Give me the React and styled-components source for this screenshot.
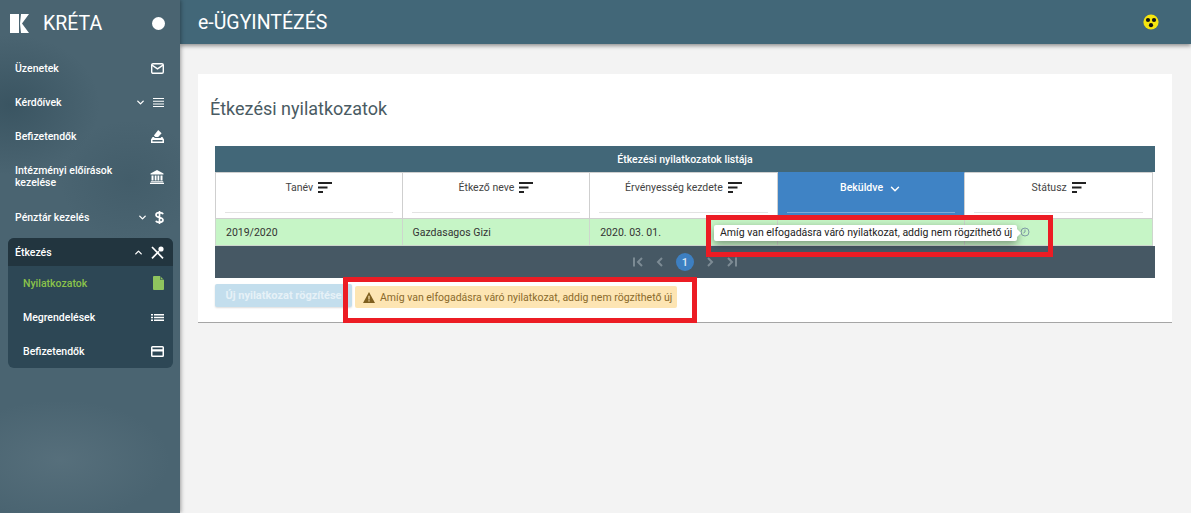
import { createGlobalStyle } from 'styled-components';
import styled from 'styled-components';
import { LuChevronDown, LuChevronUp } from 'react-icons/lu';

const GlobalStyle = createGlobalStyle`
  html, body { margin: 0; padding: 0; }
  body {
    background: #f3f3f3;
    font-family: Roboto, "Liberation Sans", sans-serif;
    overflow: hidden;
  }
`;

const Page = styled.div`
  display: flex;
  width: 1191px;
  height: 513px;
  overflow: hidden;
`;

const Sidebar = styled.aside`
  width: 180px;
  flex: none;
  box-sizing: border-box;
  color: #fff;
  box-shadow: 1px 0 4px rgba(0, 0, 0, 0.35);
  position: relative;
  z-index: 2;
  background:
    radial-gradient(ellipse 90px 70px at 10px 105px, rgba(45, 72, 85, 0.55), transparent),
    radial-gradient(ellipse 70px 60px at 130px 180px, rgba(45, 72, 85, 0.25), transparent),
    radial-gradient(ellipse 110px 60px at 60px 460px, rgba(130, 150, 160, 0.22), transparent),
    #4a6471;
`;

const Brand = styled.div`
  height: 46px;
  display: flex;
  align-items: center;
  padding: 0 15px 0 10px;
  font-size: 19.5px;
  span { margin-left: 13px; flex: 1; }
`;

const Dot = styled.i`
  width: 13px;
  height: 13px;
  border-radius: 50%;
  background: #fff;
`;

const Menu = styled.nav`
  display: flex;
  flex-direction: column;
  margin-top: 5px;
`;

const Item = styled.div`
  height: ${p => (p.$open ? 28 : 34)}px;
  flex: none;
  display: flex;
  align-items: center;
  gap: 7px;
  padding: 0 16px 0 15px;
  font-size: 10.5px;
  font-weight: 500;
  line-height: 12px;
  color: ${p => (p.$active ? '#8bc34a' : '#fff')};
  background: ${p => (p.$open ? '#22353f' : 'transparent')};
  border-radius: ${p => (p.$open ? '6px 6px 0 0' : '0')};
  svg { flex: none; }
`;

const Tall = styled(Item)`
  height: 47px;
`;

const Label = styled.div`
  flex: 1;
  margin-top: 1px;
`;

const OpenGroup = styled.div`
  margin: 4px 7px 0 8px;
  background: #2d4755;
  border-radius: 6px;
  ${Item} { padding-left: 7px; padding-right: 9px; }
  ${Item}[data-sub] { padding-left: 15px; }
`;

const Main = styled.main`
  flex: 1;
  min-width: 0;
  display: flex;
  flex-direction: column;
`;

const Header = styled.header`
  height: 44px;
  flex: none;
  background: #426778;
  box-shadow: 0 2px 4px rgba(0, 0, 0, 0.4);
  display: flex;
  align-items: center;
  justify-content: space-between;
  padding: 0 32px 0 18px;
  color: #fff;
  font-size: 19.5px;
`;

const Content = styled.div`
  padding: 30px 19px 0 18px;
`;

const Card = styled.section`
  height: 249px;
  box-sizing: border-box;
  background: #fff;
  border-bottom: 1px solid #a5a5a5;
  padding: 24px 17px 0 12px;
  position: relative;
`;

const Title = styled.h1`
  margin: 0 0 26px;
  font-size: 18px;
  line-height: 22px;
  font-weight: 400;
  color: #4a5b63;
`;

const TableWrap = styled.div`
  margin-left: 5px;
  width: 940px;
`;

const Caption = styled.div`
  height: 26px;
  background: #426778;
  color: #fff;
  font-size: 10.5px;
  font-weight: 500;
  display: flex;
  align-items: center;
  justify-content: center;
`;

const Cols = styled.div`
  display: grid;
  grid-template-columns: repeat(5, 187.6px);
  width: 938px;
`;

const HeadCell = styled.div`
  height: 47px;
  box-sizing: border-box;
  background: ${p => (p.$sorted ? '#3f83c5' : '#fff')};
  color: ${p => (p.$sorted ? '#fff' : '#444')};
  border: 1px solid #cfcfcf;
  border-width: 1px 1px 1px 0;
  ${p => p.$first && 'border-left-width: 1px;'}
  ${p => p.$sorted && 'border-color: #3f83c5 #cfcfcf #cfcfcf #3f83c5;'}
  font-size: 10.5px;
  font-weight: ${p => (p.$sorted ? 500 : 400)};
  padding: 0 9px;
`;

const HeadTitle = styled.div`
  height: 40px;
  padding-top: 7px;
  box-sizing: border-box;
  display: flex;
  justify-content: center;
  gap: 5px;
  line-height: 15px;
  border-bottom: 1px solid ${p => (p.$sorted ? '#7ea9d6' : '#e3e3e3')};
  svg { flex: none; margin-top: 2px; }
`;

const Cell = styled.div`
  height: 27px;
  box-sizing: border-box;
  background: #c6f5c6;
  border: 1px solid #cdd6cd;
  border-width: 0 1px 1px 0;
  ${p => p.$first && 'border-left-width: 1px;'}
  color: #333;
  font-size: 10.5px;
  padding-left: 10px;
  display: flex;
  align-items: center;
`;

const StatusIcon = styled.svg`
  margin-left: 45px;
`;

const Pager = styled.div`
  height: 32px;
  background: #465864;
  display: flex;
  align-items: center;
  justify-content: center;
  gap: 10px;
  color: #7c8b94;
`;

const PageDot = styled.div`
  width: 18px;
  height: 18px;
  border-radius: 50%;
  background: #3d7fc1;
  color: #dfe9f3;
  font-size: 11px;
  font-weight: 500;
  display: flex;
  align-items: center;
  justify-content: center;
`;

const Actions = styled.div`
  display: flex;
  align-items: flex-start;
  margin-top: 6px;
  gap: 3px;
`;

const Button = styled.button`
  width: 137px;
  height: 23px;
  border: 0;
  border-radius: 2px;
  padding: 0;
  background: #c3deed;
  color: #e6f1f7;
  font: 700 11px Roboto, "Liberation Sans", sans-serif;
  box-shadow: 0 1px 2px rgba(0, 0, 0, 0.14);
  white-space: nowrap;
`;

const Alert = styled.div`
  width: 322px;
  height: 22px;
  margin-top: 2px;
  box-sizing: border-box;
  border-radius: 2px;
  background: #fde5b3;
  color: #8a6a2b;
  font-size: 10.5px;
  display: flex;
  align-items: center;
  gap: 5px;
  padding-left: 8px;
  white-space: nowrap;
  svg { flex: none; }
`;

const Tooltip = styled.div`
  position: absolute;
  left: 516px;
  top: 151px;
  height: 16px;
  width: 303px;
  box-sizing: border-box;
  background: #fff;
  border-radius: 2px;
  box-shadow: 0 3px 8px rgba(0, 0, 0, 0.4);
  color: #222;
  font-size: 10.5px;
  line-height: 16px;
  padding-left: 6px;
  white-space: nowrap;
  &::after {
    content: '';
    position: absolute;
    right: -4px;
    top: 4px;
    border: 4px solid transparent;
    border-left-color: #fff;
    border-right-width: 0;
  }
`;

const Mark = styled.div`
  position: absolute;
  box-sizing: border-box;
  border: 5px solid #ec1c24;
  left: ${p => p.$l}px;
  top: ${p => p.$t}px;
  width: ${p => p.$w}px;
  height: ${p => p.$h}px;
`;

const Logo = () => (
  <svg width="20" height="19" viewBox="0 0 20 19">
    <path fill="#fff" d="M0 0h9v19H0z" />
    <path fill="#fff" d="M11 0h8l-7 9.5 7 9.5h-8l-1-9.500z" />
    <path fill="#4a6471" d="M15 9.5l4-4v8z" />
  </svg>
);

const SortIcon = ({ color = '#222' }) => (
  <svg width="14" height="11" viewBox="0 0 14 11" fill={color}>
    <path d="M0 0h14v2H0zM0 4.5h9.5v2H0zM0 9h5v2H0z" />
  </svg>
);

const MailIcon = () => (
  <svg width="13" height="11" viewBox="0 0 13 11" fill="none" stroke="#fff" strokeWidth="1.4">
    <rect x="0.7" y="0.7" width="11.6" height="9.6" rx="1.4" />
    <path d="M1 2.2l5.5 3.6L12 2.2" />
  </svg>
);

const LinesIcon = () => (
  <svg width="11" height="9" viewBox="0 0 11 9" fill="#fff">
    <path d="M0 0h11v1H0zM0 2.7h11v1H0zM0 5.4h11v1H0zM0 8h11v1H0z" />
  </svg>
);

const BallotIcon = () => (
  <svg width="13" height="13" viewBox="0 0 13 13" fill="#fff">
    <path d="M7.2 0l3.4 3.2-3.4 3.9H4.4L2.9 5.5z" />
    <path fillRule="evenodd" d="M1.6 7h1.3l.9 1.1h5.7L10.4 7h1L13 9.5V13H0V9.5zM1.5 10v1.6h10V10z" />
  </svg>
);

const BankIcon = () => (
  <svg width="14" height="14" viewBox="0 0 14 14" fill="#fff">
    <path d="M7 0l6.5 3.4v1.100h-13V3.400zM1.500 5.500h2v5h-2zM4.700 5.500h1.800v5H4.700zM7.500 5.500h1.800v5H7.500zM10.500 5.500h2v5h-2zM.8 11.200h12.400v1H.8zM0 12.800h14V14H0z" />
  </svg>
);

const DollarIcon = () => (
  <svg width="9" height="13" viewBox="0 0 9 13" fill="none" stroke="#fff" strokeWidth="1.7">
    <path d="M4.5 0v13M8 3.200C7.600 2 6.200 1.700 4.500 1.700 2.500 1.700 1 2.500 1 4s1.500 2 3.500 2.500S8 7.500 8 9s-1.500 2.300-3.500 2.300c-1.700 0-3.100-.4-3.500-1.600" />
  </svg>
);

const DocIcon = () => (
  <svg width="11" height="14" viewBox="0 0 11 14" fill="#8fc45e">
    <path d="M1 0h6l4 4v9a1 1 0 0 1-1 1H1a1 1 0 0 1-1-1V1a1 1 0 0 1 1-1z" />
    <path fill="#2d4755" d="M7 0v3a1 1 0 0 0 1 1h3l-.6-.6H8a.5.5 0 0 1-.4-.4V.6z" />
  </svg>
);

const ListIcon = () => (
  <svg width="13" height="7" viewBox="0 0 13 7" fill="#fff">
    <path d="M0 0h2v1.500H0zM3 0h10v1.500H3zM0 2.700h2v1.500H0zM3 2.700h10v1.500H3zM0 5.400h2v1.500H0zM3 5.400h10v1.500H3z" />
  </svg>
);

const CardIcon = () => (
  <svg width="13" height="11" viewBox="0 0 13 11" fill="#fff">
    <path fillRule="evenodd" d="M1.500 0h10A1.500 1.500 0 0 1 13 1.500v8a1.500 1.500 0 0 1-1.500 1.500h-10A1.500 1.500 0 0 1 0 9.500v-8A1.500 1.500 0 0 1 1.500 0zM1.500 3.200h10V1.500h-10zM1.500 5.500v4h10v-4z" />
  </svg>
);

const ForkIcon = () => (
  <svg width="13" height="13" viewBox="0 0 13 13" fill="none" stroke="#fff" strokeWidth="1.7">
    <path d="M1 1l11 11.300M1 12.300l7-7" />
    <ellipse cx="10" cy="3" rx="2.6" ry="2.6" fill="#fff" stroke="none" />
  </svg>
);

const EyeIcon = () => (
  <svg width="16" height="16" viewBox="0 0 16 16">
    <circle cx="8" cy="8" r="7.6" fill="#f5e50f" />
    <circle cx="5" cy="6" r="2.1" fill="#111" />
    <circle cx="11" cy="6" r="2.1" fill="#111" />
    <circle cx="8" cy="11.2" r="2.1" fill="#111" />
  </svg>
);

const WarnIcon = () => (
  <svg width="12" height="11" viewBox="0 0 12 11">
    <path fill="#7f5f1e" d="M6 0l6 11H0z" />
    <path fill="#fde5b3" d="M5.4 3.800h1.200v3.700H5.400zM5.400 8.200h1.200v1.200H5.400z" />
  </svg>
);

// pager arrows: d is the chevron, bar is the optional stop line
const PagerIcon = ({ d, bar }) => (
  <svg width="12" height="12" viewBox="0 0 12 12" fill="none" stroke="currentColor" strokeWidth="2">
    <path d={d} />
    {bar && <path d={bar} />}
  </svg>
);

const columns = ['Tanév', 'Étkező neve', 'Érvényesség kezdete', 'Beküldve', 'Státusz'];

export default function App() {
  return (
    <Page>
      <GlobalStyle />
      <Sidebar>
        <Brand>
          <Logo />
          <span>KRÉTA</span>
          <Dot />
        </Brand>
        <Menu>
          <Item>
            <Label>Üzenetek</Label>
            <MailIcon />
          </Item>
          <Item>
            <Label>Kérdőívek</Label>
            <LuChevronDown size={11} strokeWidth={3} />
            <LinesIcon />
          </Item>
          <Item>
            <Label>Befizetendők</Label>
            <BallotIcon />
          </Item>
          <Tall>
            <Label>Intézményi előírások kezelése</Label>
            <BankIcon />
          </Tall>
          <Item>
            <Label>Pénztár kezelés</Label>
            <LuChevronDown size={11} strokeWidth={3} />
            <DollarIcon />
          </Item>
          <OpenGroup>
            <Item $open>
              <Label>Étkezés</Label>
              <LuChevronUp size={11} strokeWidth={3} />
              <ForkIcon />
            </Item>
            <Item data-sub $active>
              <Label>Nyilatkozatok</Label>
              <DocIcon />
            </Item>
            <Item data-sub>
              <Label>Megrendelések</Label>
              <ListIcon />
            </Item>
            <Item data-sub>
              <Label>Befizetendők</Label>
              <CardIcon />
            </Item>
          </OpenGroup>
        </Menu>
      </Sidebar>
      <Main>
        <Header>
          <span>e-ÜGYINTÉZÉS</span>
          <EyeIcon />
        </Header>
        <Content>
          <Card>
            <Title>Étkezési nyilatkozatok</Title>
            <TableWrap>
              <Caption>Étkezési nyilatkozatok listája</Caption>
              <Cols>
                {columns.map((c, i) => (
                  <HeadCell key={c} $first={i === 0} $sorted={c === 'Beküldve'}>
                    <HeadTitle $sorted={c === 'Beküldve'}>
                      {c}
                      {c === 'Beküldve' ? <LuChevronDown size={14} strokeWidth={2.5} /> : <SortIcon />}
                    </HeadTitle>
                  </HeadCell>
                ))}
                <Cell $first>2019/2020</Cell>
                <Cell>Gazdasagos Gizi</Cell>
                <Cell>2020. 03. 01.</Cell>
                <Cell />
                <Cell>
                  <StatusIcon width="10" height="10" viewBox="0 0 10 10" fill="none" stroke="#7f9ba6">
                    <circle cx="5" cy="5" r="4" />
                    <path d="M5 2.5V5L3.4 6" />
                  </StatusIcon>
                </Cell>
              </Cols>
              <Pager>
                <PagerIcon d="M10 2L6 6l4 4" bar="M2 1.5v9" />
                <PagerIcon d="M8 2L4 6l4 4" />
                <PageDot>1</PageDot>
                <PagerIcon d="M4 2l4 4-4 4" />
                <PagerIcon d="M2 2l4 4-4 4" bar="M10 1.5v9" />
              </Pager>
              <Actions>
                <Button>Új nyilatkozat rögzítése</Button>
                <Alert>
                  <WarnIcon />
                  Amíg van elfogadásra váró nyilatkozat, addig nem rögzíthető új
                </Alert>
              </Actions>
            </TableWrap>
            <Tooltip>Amíg van elfogadásra váró nyilatkozat, addig nem rögzíthető új</Tooltip>
            <Mark $l={508} $t={141} $w={347} $h={42} />
            <Mark $l={145} $t={203} $w={354} $h={46} />
          </Card>
        </Content>
      </Main>
    </Page>
  );
}
